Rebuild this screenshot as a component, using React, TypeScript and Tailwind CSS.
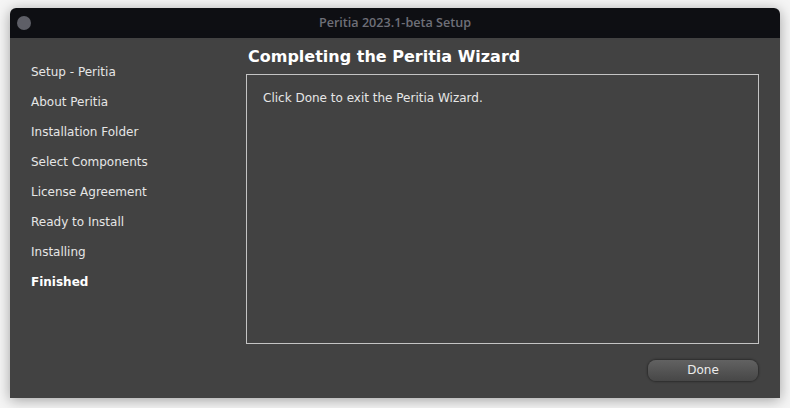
import React from 'react';

const steps = [
  'Setup - Peritia',
  'About Peritia',
  'Installation Folder',
  'Select Components',
  'License Agreement',
  'Ready to Install',
  'Installing',
  'Finished',
];

export default function App() {
  const current = 'Finished';

  return (
    <div className="w-[790px] h-[408px] bg-[#f5f5f5] pt-[8px] pl-[10px] overflow-hidden">
      <div className="w-[770px] h-[390px] flex flex-col shadow-[0_2px_14px_rgba(0,0,0,0.35)] rounded-t-[6px]">
        {/* title bar */}
        <div className="h-[30px] bg-[#0e0f13] rounded-t-[6px] flex items-center relative">
          <div className="ml-[7px] w-[14px] h-[14px] rounded-full bg-[#5e5f67]" />
          <div className="absolute inset-0 flex items-center justify-center font-['Open_Sans',sans-serif] font-semibold text-[12.6px] text-[#6e6f78]">
            Peritia 2023.1-beta Setup
          </div>
        </div>

        <div className="flex-1 bg-[#424242] flex font-['DejaVu_Sans',sans-serif] text-[12px] text-[#e6e6e6]">
          <div className="w-[236px] pl-[21px] pt-[19px]">
            {steps.map((step) => (
              <div
                key={step}
                className={`leading-[30px] ${step === current ? 'font-bold text-white' : ''}`}
              >
                {step}
              </div>
            ))}
          </div>

          <div className="w-[513px] flex flex-col pt-[9px]">
            <h1 className="pl-[2px] text-[16px] leading-[20px] font-bold text-white">
              Completing the Peritia Wizard
            </h1>
            <div className="mt-[7px] h-[270px] border border-[#c4c4c4] pl-[16px] pt-[15px] leading-[16px]">
              Click Done to exit the Peritia Wizard.
            </div>
            <div className="flex justify-end mt-[16px] pr-[1px]">
              <button className="w-[110px] h-[21px] rounded-[8px] bg-gradient-to-b from-[#626262] to-[#474747] shadow-[0_0_2px_1px_rgba(0,0,0,0.35)] text-[12px] text-[#ececec] leading-[21px]">
                Done
              </button>
            </div>
          </div>
        </div>
      </div>
    </div>
  );
}
